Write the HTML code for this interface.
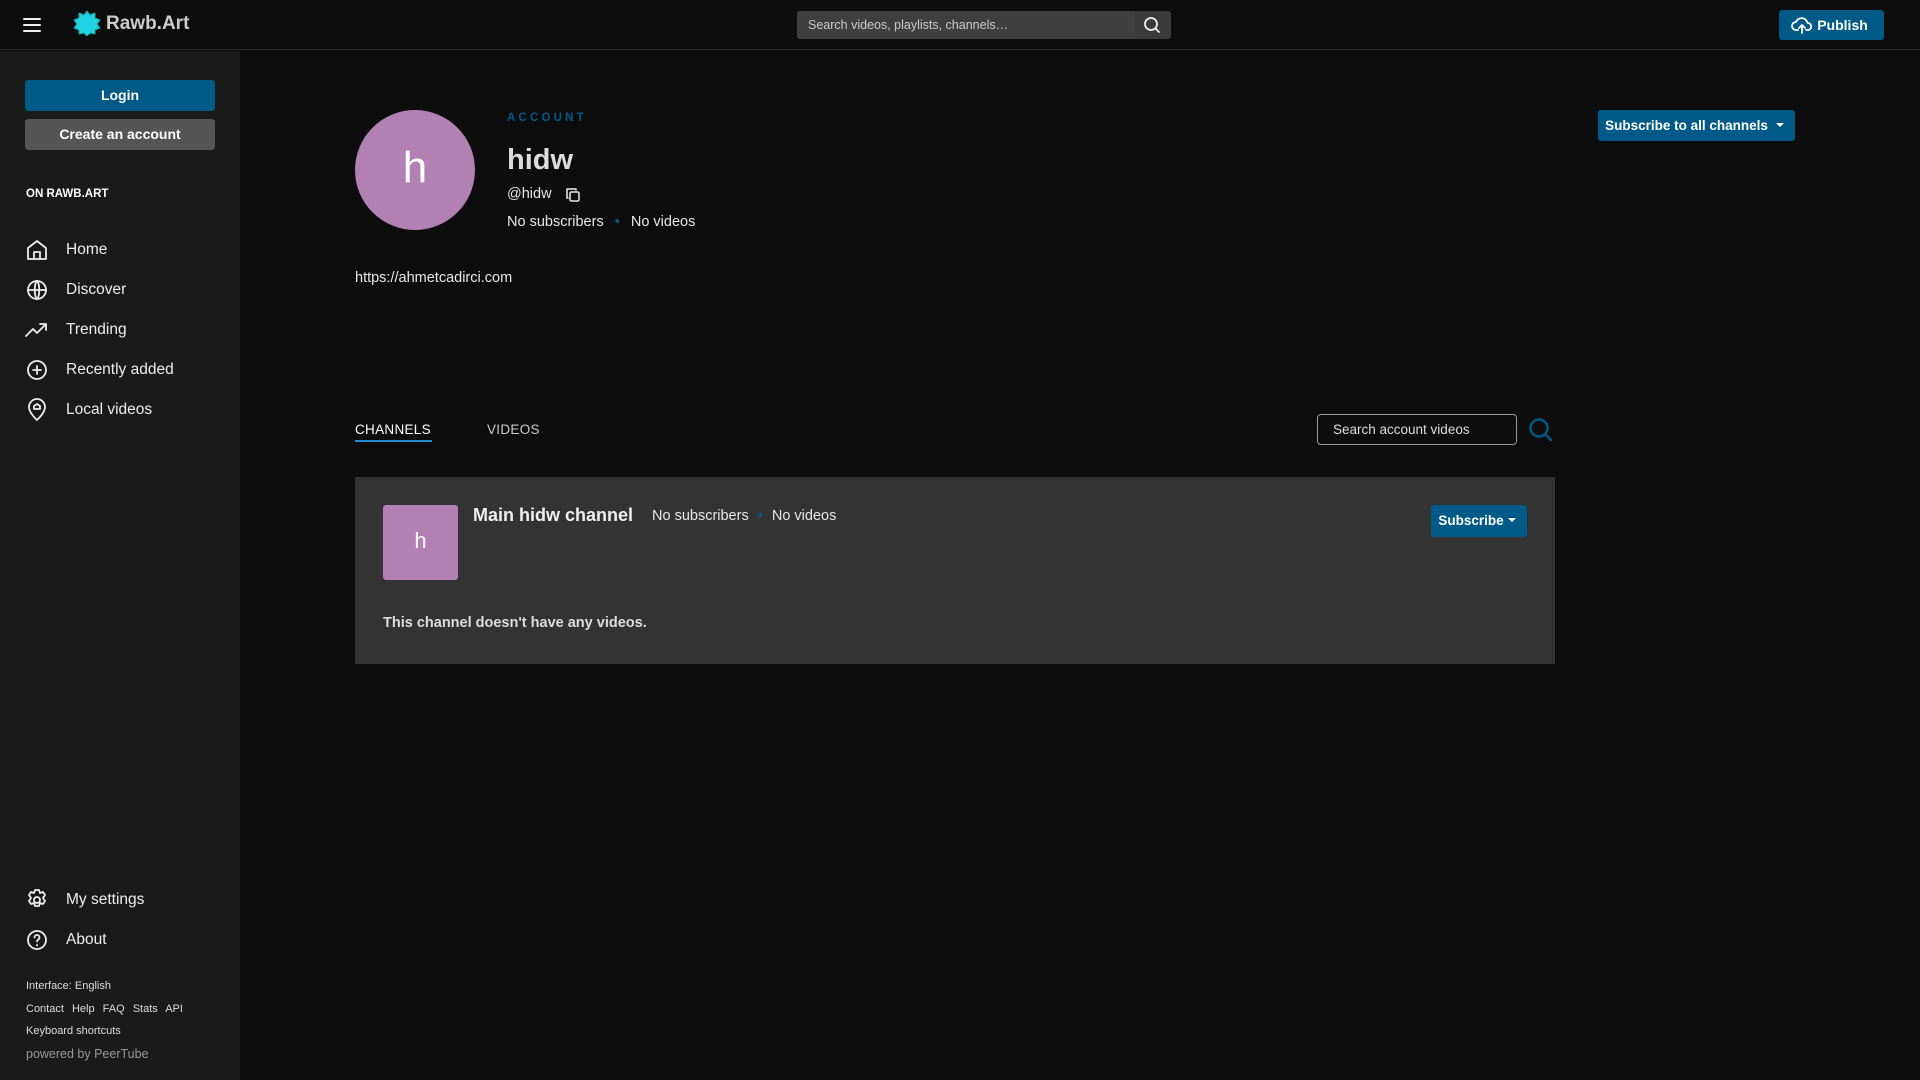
<!DOCTYPE html><html><head><meta charset="utf-8"><style>
*{box-sizing:border-box;margin:0;padding:0}
body{width:1920px;height:1080px;background:#0d0d0d;font-family:"Liberation Sans",sans-serif;color:#e8e8e8;position:relative;overflow:hidden}
.a{position:absolute;white-space:nowrap}
header{position:absolute;left:0;top:0;width:1920px;height:50px;background:#0d0d0d;border-bottom:1px solid #2a2a2a}
aside{position:absolute;left:0;top:51px;width:240px;height:1029px;background:#1a1a1a}
.btn{position:absolute;border-radius:3px;color:#fff;font-weight:bold;text-align:center;font-size:14px;white-space:nowrap}
.nav{position:absolute;left:25px;font-size:15.5px;color:#eee;white-space:nowrap;width:200px;height:24px}
.nav svg{position:absolute;left:0;top:-1px}
.nav span{position:absolute;left:41px;top:2px}
.ft{position:absolute;left:26px;font-size:11px;color:#ddd;white-space:nowrap}
svg{fill:none;stroke:#eee;stroke-width:1.8;stroke-linecap:round;stroke-linejoin:round}
</style></head><body>
<header>
<svg class="a" style="left:22px;top:17px" width="20" height="16" viewBox="0 0 20 16"><path d="M2 2h16M2 8h16M2 14h16" stroke-width="2"/></svg>
<svg class="a" style="left:73px;top:10px" width="28" height="26" viewBox="0 0 28 26"><path d="M14 1l3 4 5-2 0 5 5 2-3 4 3 4-5 2 0 4-5-1-3 3-3-3-5 1 0-4-5-2 3-4-3-4 5-2 0-5 5 2z" fill="#22d3e6" stroke="#1aa" stroke-width="1"/></svg>
<div class="a" style="left:106px;top:13px;font-size:19px;font-weight:bold;color:#ccc">Rawb.Art</div>
<div class="a" style="left:797px;top:11px;width:374px;height:28px;background:#3a3a3a;border-radius:3px"></div>
<div class="a" style="left:797px;top:11px;width:338px;height:28px;background:#3f3f3f;border-radius:3px 0 0 3px"></div>
<div class="a" style="left:808px;top:18px;font-size:12.5px;color:#ccc">Search videos, playlists, channels…</div>
<svg class="a" style="left:1143px;top:16px" width="18" height="18" viewBox="0 0 18 18"><circle cx="8" cy="8" r="6"/><path d="M12.5 12.5L16 16"/></svg>
<div class="btn" style="left:1779px;top:10px;width:105px;height:30px;background:#005a87;line-height:30px;padding-left:22px">Publish</div>
<svg class="a" style="left:1791px;top:15px" width="22" height="20" viewBox="0 0 22 20"><path d="M7 15H5a4 4 0 010-8 6 6 0 0111.5 1A3.5 3.5 0 0117 15h-2M11 10v8M8 13l3-3 3 3" stroke="#fff"/></svg>
</header>
<aside>
<div class="btn" style="left:25px;top:29px;width:190px;height:31px;background:#005a87;line-height:31px">Login</div>
<div class="btn" style="left:25px;top:68px;width:190px;height:31px;background:#555;line-height:31px">Create an account</div>
<div class="a" style="left:26px;top:137px;font-size:11.5px;font-weight:bold;color:#fff">ON RAWB.ART</div>
<div class="nav" style="top:188px"><svg width="24" height="24" viewBox="0 0 24 24"><path d="M3 10L12 3l9 7v11H3zM9 21v-7h6v7"/></svg><span>Home</span></div>
<div class="nav" style="top:228px"><svg width="24" height="24" viewBox="0 0 24 24"><circle cx="12" cy="12" r="9"/><path d="M3 12h18M12 3c3 3 3 15 0 18M12 3c-3 3-3 15 0 18"/></svg><span>Discover</span></div>
<div class="nav" style="top:268px"><svg width="24" height="24" viewBox="0 0 24 24"><path d="M1 18l7-7 4 4 9-9M15 6h6v6"/></svg><span>Trending</span></div>
<div class="nav" style="top:308px"><svg width="24" height="24" viewBox="0 0 24 24"><circle cx="12" cy="12" r="9"/><path d="M12 8v8M8 12h8"/></svg><span>Recently added</span></div>
<div class="nav" style="top:348px"><svg width="24" height="24" viewBox="0 0 24 24"><path d="M12 22s-8-7-8-13a8 8 0 0116 0c0 6-8 13-8 13zM9 11V8l3-2 3 2v3z"/></svg><span>Local videos</span></div>
<div class="nav" style="top:838px"><svg width="24" height="24" viewBox="0 0 24 24"><circle cx="12" cy="12" r="3"/><path d="M10 2h4l1 3 3-1 2 3-2 3 2 3-2 3-3-1-1 3h-4l-1-3-3 1-2-3 2-3-2-3 2-3 3 1z"/></svg><span>My settings</span></div>
<div class="nav" style="top:878px"><svg width="24" height="24" viewBox="0 0 24 24"><circle cx="12" cy="12" r="9"/><path d="M9.5 9.5a2.5 2.5 0 115 0c0 2-2.5 2-2.5 4M12 17v.5"/></svg><span>About</span></div>
<div class="ft" style="top:929px">Interface: English</div>
<div class="ft" style="top:952px;word-spacing:5px">Contact Help FAQ Stats API</div>
<div class="ft" style="top:974px">Keyboard shortcuts</div>
<div class="ft" style="top:996px;font-size:12.5px;color:#999">powered by PeerTube</div>
</aside>
<div class="a" style="left:355px;top:110px;width:120px;height:120px;border-radius:50%;background:#b380b3;color:#fff;font-size:44px;text-align:center;line-height:116px">h</div>
<div class="a" style="left:507px;top:112px;font-size:11.5px;font-weight:bold;letter-spacing:3.2px;color:#005a87">ACCOUNT</div>
<div class="a" style="left:507px;top:144px;font-size:29px;font-weight:bold;color:#ddd">hidw</div>
<div class="a" style="left:507px;top:186px;font-size:14.5px">@hidw</div>
<svg class="a" style="left:565px;top:187px" width="16" height="16" viewBox="0 0 16 16"><rect x="5" y="5" width="9" height="9" rx="1.5" stroke-width="1.5"/><path d="M11 3V2H2v9h1" stroke-width="1.5"/></svg>
<div class="a" style="left:507px;top:214px;font-size:14.5px">No subscribers <span style="color:#005a87;margin:0 7px">•</span> No videos</div>
<div class="a" style="left:355px;top:270px;font-size:14.5px">https://ahmetcadirci.com</div>
<div class="btn" style="left:1598px;top:110px;width:197px;height:31px;background:#005a87;line-height:31px;font-size:13.5px;padding-right:20px">Subscribe to all channels</div>
<div class="a" style="left:1776px;top:123px;border:4px solid transparent;border-top:4px solid #fff"></div>
<div class="a" style="left:355px;top:422px;font-size:13.5px;letter-spacing:.3px;color:#fff">CHANNELS</div>
<div class="a" style="left:355px;top:440px;width:77px;height:2px;background:#1a8ccf"></div>
<div class="a" style="left:487px;top:422px;font-size:13.5px;letter-spacing:.3px;color:#ccc">VIDEOS</div>
<div class="a" style="left:1317px;top:414px;width:200px;height:31px;border:1px solid #999;border-radius:4px;font-size:13.5px;color:#ddd;padding:7px 15px">Search account videos</div>
<svg class="a" style="left:1528px;top:417px;stroke:#005a87;stroke-width:2.5" width="26" height="26" viewBox="0 0 26 26"><circle cx="11" cy="11" r="8.5"/><path d="M17 17l6 6"/></svg>
<div class="a" style="left:355px;top:477px;width:1200px;height:187px;background:#333"></div>
<div class="a" style="left:383px;top:505px;width:75px;height:75px;border-radius:3px;background:#b380b3;color:#fff;font-size:22px;text-align:center;line-height:72px">h</div>
<div class="a" style="left:473px;top:505px;font-size:18px;font-weight:bold;color:#eee">Main hidw channel</div>
<div class="a" style="left:652px;top:508px;font-size:14.5px">No subscribers <span style="color:#005a87;margin:0 5px">•</span> No videos</div>
<div class="btn" style="left:1431px;top:505px;width:96px;height:32px;background:#005a87;line-height:32px;font-size:13.5px;padding-right:16px">Subscribe</div>
<div class="a" style="left:1508px;top:518px;border:4px solid transparent;border-top:4px solid #fff"></div>
<div class="a" style="left:383px;top:615px;font-size:14.5px;font-weight:bold;color:#ddd">This channel doesn't have any videos.</div>
</body></html>
